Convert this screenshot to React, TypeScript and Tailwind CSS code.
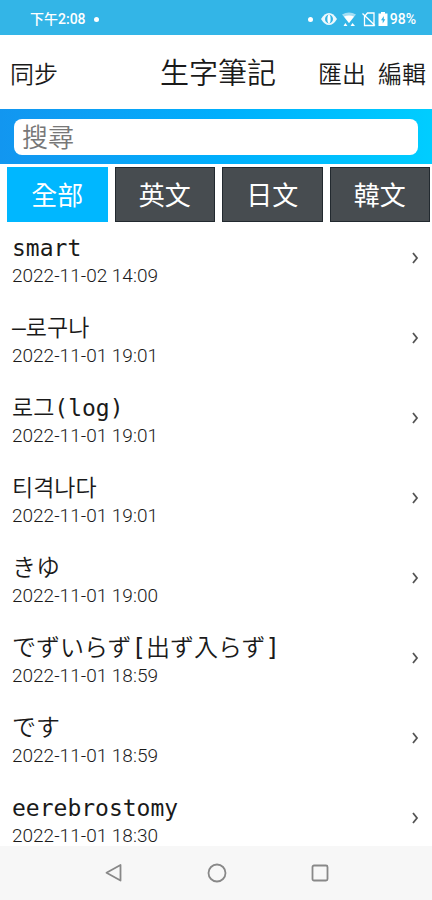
import { useState } from "react";

const entries = [
    { word: "smart", time: "2022-11-02 14:09", lang: "en" },
    { word: "–로구나", time: "2022-11-01 19:01", lang: "ko" },
    { word: "로그(log)", time: "2022-11-01 19:01", lang: "ko" },
    { word: "티격나다", time: "2022-11-01 19:01", lang: "ko" },
    { word: "きゆ", time: "2022-11-01 19:00", lang: "ja" },
    { word: "でずいらず[出ず入らず]", time: "2022-11-01 18:59", lang: "ja" },
    { word: "です", time: "2022-11-01 18:59", lang: "ja" },
    { word: "eerebrostomy", time: "2022-11-01 18:30", lang: "en" },
];

const tabs = [
    { id: "all", label: "全部" },
    { id: "en", label: "英文" },
    { id: "ja", label: "日文" },
    { id: "ko", label: "韓文" },
];

const wordFonts: Record<string, string> = {
    en: "text-[23px] font-['DejaVu_Sans_Mono',monospace]",
    ko: "text-[23px] font-['DejaVu_Sans_Mono','Noto_Sans_CJK_KR',monospace]",
    ja: "text-[24px] font-['DejaVu_Sans_Mono','Noto_Sans_CJK_JP',monospace]",
};

function StatusBar() {
    return (
        <div className="flex h-[35px] shrink-0 items-center justify-between bg-[#33b5e7] pt-[3px] pr-4 pl-[30px] text-[14px] font-medium text-white">
            <div className="flex items-center gap-2">
                <span>下午2:08</span>
                <span className="h-[5px] w-[5px] rounded-full bg-white" />
            </div>
            <div className="flex items-center">
                <span className="mr-2 h-[5px] w-[5px] rounded-full bg-white" />
                {/* Eye comfort */}
                <svg className="mr-1 h-4 w-4" viewBox="0 0 16 16">
                    <path d="M0 8Q3.500 2 8 2T16 8Q12.500 14 8 14T0 8Z" fill="white" opacity=".9" />
                    <ellipse cx="8" cy="8" rx="4" ry="4.300" fill="#33b5e7" />
                    <ellipse cx="8" cy="8" rx="1.600" ry="4.300" fill="white" />
                </svg>
                {/* Wifi */}
                <svg className="mr-1 h-4 w-4" viewBox="0 0 16 16">
                    <path d="M1 3.500Q8-.5 15 3.500L8 12Z" fill="white" opacity=".55" />
                    <path d="M3 5.500Q8 3.500 13 5.500L8 12Z" fill="white" />
                    <path d="m2.500 15 1.800-3L6.500 15ZM9.500 15l2-3L14 15Z" fill="white" />
                </svg>
                {/* No sim */}
                <svg className="h-4 w-4" viewBox="0 0 16 16" fill="none" stroke="white" strokeWidth="1.300">
                    <path d="M3.500 14.500V5.500L6.500 2H13v12.500ZM1.500 2.500l12.500 12" />
                </svg>
                {/* Battery */}
                <svg className="mr-px h-4 w-3" viewBox="0 0 12 16">
                    <path d="M4 1h4v1.500h2.500V15h-9V2.500H4Z" fill="white" />
                    <path d="M6.800 5 4 9.300h1.700V12.500L8.300 8.200H6.800Z" fill="#33b5e7" />
                </svg>
                <span>98%</span>
            </div>
        </div>
    );
}

export default function App() {
    const [tab, setTab] = useState("all");
    const [query, setQuery] = useState("");

    const shown = entries.filter(
        (entry) => (tab === "all" || entry.lang === tab) && entry.word.includes(query)
    );

    return (
        <div className="flex h-screen flex-col overflow-hidden bg-white font-[Roboto,'Noto_Sans_CJK_TC',sans-serif] text-[#1a1a1a]">
            <StatusBar />

            <header className="grid h-[74px] shrink-0 grid-cols-[1fr_auto_1fr] items-center pt-[5px] pr-[6px] pl-[10px] text-[24px] font-[350]">
                <button className="justify-self-start">同步</button>
                <h1 className="text-[29px]">生字筆記</h1>
                <div className="flex gap-3 justify-self-end">
                    <button>匯出</button>
                    <button>編輯</button>
                </div>
            </header>

            <div className="shrink-0 bg-linear-to-r from-[#1296f0] via-[#00aefc] to-[#00cdff] px-[14px] pt-[10px] pb-[9px]">
                <input
                    type="text"
                    aria-label="搜尋"
                    placeholder="搜尋"
                    value={query}
                    onChange={(e) => setQuery(e.target.value)}
                    className="block h-9 w-full rounded-lg bg-white px-2 pt-[2px] text-[26px] leading-9 font-[350] outline-none placeholder:text-[#777]"
                />
            </div>

            <div className="mt-[3px] grid shrink-0 grid-cols-4 gap-[7px] pr-[2px] pl-[7px]">
                {tabs.map((t) => (
                    <button
                        key={t.id}
                        onClick={() => setTab(t.id)}
                        className={`h-[55px] pt-[3px] text-[26px] text-white ${
                            tab === t.id ? "bg-[#00b7ff]" : "border border-[#22292f] bg-[#474c50]"
                        }`}
                    >
                        {t.label}
                    </button>
                ))}
            </div>

            <ul className="flex min-h-0 flex-1 flex-col gap-[10px] overflow-hidden">
                {shown.map((entry) => (
                    <li key={entry.word} className="shrink-0">
                        <button className="flex h-[70px] w-full items-center justify-between pt-px pr-[13px] pl-3 text-left">
                            <span className="flex flex-col pt-1">
                                <span className={`h-8 leading-8 font-[350] whitespace-nowrap ${wordFonts[entry.lang]}`}>
                                    {entry.word}
                                </span>
                                <span className="text-[19px] leading-6 font-light">{entry.time}</span>
                            </span>
                            <svg className="h-3 w-2" viewBox="0 0 8 12" fill="none" stroke="#555" strokeWidth="1.800">
                                <path d="m2 1 4 5-4 5" />
                            </svg>
                        </button>
                    </li>
                ))}
            </ul>

            <nav className="flex h-[54px] shrink-0 items-center justify-center gap-[83px] bg-[#f7f7f7] pl-[2px]">
                <button aria-label="返回">
                    <svg className="h-5 w-5" viewBox="0 0 20 20" fill="none" stroke="#888" strokeWidth="1.800" strokeLinejoin="round">
                        <path d="M16.500 2v15.500L2.500 9.800Z" />
                    </svg>
                </button>
                <button aria-label="主畫面">
                    <svg className="h-5 w-5" viewBox="0 0 20 20" fill="none" stroke="#888" strokeWidth="1.800">
                        <circle cx="10" cy="10" r="8.500" />
                    </svg>
                </button>
                <button aria-label="最近">
                    <svg className="h-5 w-5" viewBox="0 0 20 20" fill="none" stroke="#888" strokeWidth="1.800">
                        <rect x="2.500" y="2.500" width="15" height="15" rx="1.500" />
                    </svg>
                </button>
            </nav>
        </div>
    );
}
